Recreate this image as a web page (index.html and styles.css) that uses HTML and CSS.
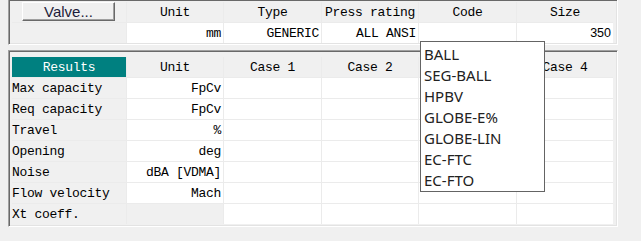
FILE: index.html
```html
<!DOCTYPE html>
<html lang="en">
<head>
    <meta charset="UTF-8">
    <meta name="viewport" content="width=device-width, initial-scale=1.0">
    <title>Valve Sizing</title>
    <link rel="stylesheet" href="styles.css">
</head>
<body>
    <div class="panel valve-panel">
        <div class="grid">
            <div class="cell head"><button class="valve-btn">Valve...</button></div>
            <div class="cell head">Unit</div>
            <div class="cell head">Type</div>
            <div class="cell head">Press rating</div>
            <div class="cell head">Code</div>
            <div class="cell head">Size</div>

            <div class="cell label"></div>
            <div class="cell value">mm</div>
            <div class="cell value">GENERIC</div>
            <div class="cell value">ALL ANSI</div>
            <div class="cell value"></div>
            <div class="cell value sans">350</div>
        </div>
    </div>

    <div class="panel results-panel">
        <div class="grid">
            <div class="cell head selected">Results</div>
            <div class="cell head">Unit</div>
            <div class="cell head">Case 1</div>
            <div class="cell head">Case 2</div>
            <div class="cell head">Case 3</div>
            <div class="cell head">Case 4</div>

            <div class="cell label">Max capacity</div>
            <div class="cell value">FpCv</div>
            <div class="cell value"></div><div class="cell value"></div><div class="cell value"></div><div class="cell value"></div>

            <div class="cell label">Req capacity</div>
            <div class="cell value">FpCv</div>
            <div class="cell value"></div><div class="cell value"></div><div class="cell value"></div><div class="cell value"></div>

            <div class="cell label">Travel</div>
            <div class="cell value">%</div>
            <div class="cell value"></div><div class="cell value"></div><div class="cell value"></div><div class="cell value"></div>

            <div class="cell label">Opening</div>
            <div class="cell value">deg</div>
            <div class="cell value"></div><div class="cell value"></div><div class="cell value"></div><div class="cell value"></div>

            <div class="cell label">Noise</div>
            <div class="cell value">dBA [VDMA]</div>
            <div class="cell value"></div><div class="cell value"></div><div class="cell value"></div><div class="cell value"></div>

            <div class="cell label">Flow velocity</div>
            <div class="cell value">Mach</div>
            <div class="cell value"></div><div class="cell value"></div><div class="cell value"></div><div class="cell value"></div>

            <div class="cell label">Xt coeff.</div>
            <div class="cell label"></div>
            <div class="cell value"></div><div class="cell value"></div><div class="cell value"></div><div class="cell value"></div>
        </div>
    </div>

    <ul class="dropdown">
        <li>BALL</li>
        <li>SEG-BALL</li>
        <li>HPBV</li>
        <li>GLOBE-E%</li>
        <li>GLOBE-LIN</li>
        <li>EC-FTC</li>
        <li>EC-FTO</li>
    </ul>
</body>
</html>
```

FILE: styles.css
```css
body {
    margin: 0;
    width: 641px;
    height: 241px;
    overflow: hidden;
    position: relative;
    background-color: #f0f0f0;
    font-family: "Liberation Mono", monospace;
    font-size: 13px;
    letter-spacing: -0.3px;
    color: #000;
}

.panel {
    box-sizing: border-box;
    width: 610px;
    margin-left: 8px;
    border-top: 1px solid #a0a0a0;
    border-left: 1px solid #a0a0a0;
    border-right: 1px solid #fff;
    border-bottom: 1px solid #fff;
    box-shadow: inset 1px 1px 0 #696969, inset -1px -1px 0 #e3e3e3;
    padding: 2px 4px 1px 3px;
}

.valve-panel {
    margin-top: -1px;
}

.results-panel {
    margin-top: 5px;
    padding-top: 6px;
    padding-bottom: 2px;
}

.grid {
    display: grid;
    grid-template-columns: 114px 96px 97px 96px 97px 96px;
    grid-auto-rows: 20px;
    gap: 1px;
    background-color: #ebebeb;
}

.cell {
    display: flex;
    align-items: center;
    white-space: nowrap;
    overflow: hidden;
}

.head {
    justify-content: center;
    background-color: #f0f0f0;
}

.head.selected {
    background-color: #008080;
    color: #fff;
}

.label {
    background-color: #f0f0f0;
}

.value {
    justify-content: flex-end;
    padding-right: 2px;
    background-color: #fff;
}

.sans {
    font-family: "Liberation Sans", Arial, sans-serif;
    font-size: 12.5px;
    letter-spacing: 0;
}

.valve-btn {
    box-sizing: border-box;
    width: 93px;
    height: 19px;
    margin: 0 1px 1px 0;
    padding: 0;
    font-family: "Liberation Sans", Arial, sans-serif;
    font-size: 15px;
    color: #1c1c3a;
    background-color: #f0f0f0;
    border-top: 1px solid #fff;
    border-left: 1px solid #fff;
    border-right: 1px solid #696969;
    border-bottom: 1px solid #696969;
    box-shadow: inset -1px -1px 0 #a0a0a0;
}

.dropdown {
    position: absolute;
    left: 420px;
    top: 41px;
    box-sizing: border-box;
    width: 125px;
    height: 151px;
    margin: 0;
    padding: 2px 0 0 3px;
    list-style: none;
    background-color: #fff;
    border: 1px solid #646464;
    font-family: "Noto Sans", sans-serif;
    font-size: 15px;
    letter-spacing: 0;
    line-height: 21px;
    color: #222;
}
```
